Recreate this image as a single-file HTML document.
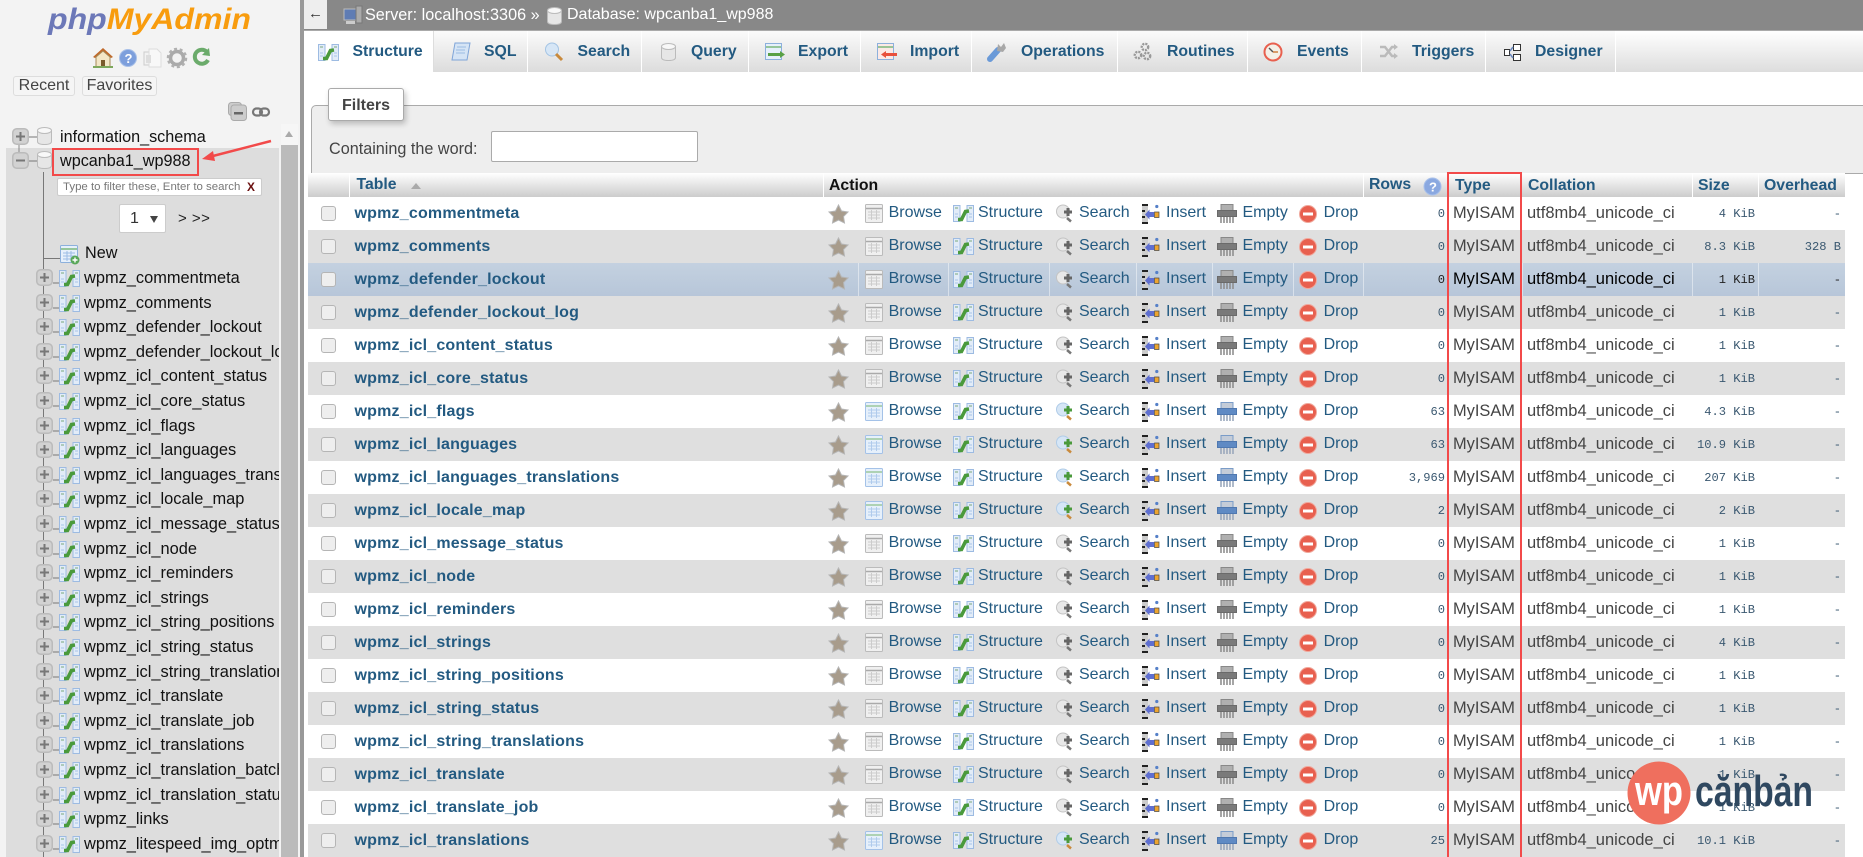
<!DOCTYPE html>
<html lang="en"><head><meta charset="utf-8"><title>phpMyAdmin</title>
<style>
html,body{margin:0;padding:0;background:#fff;overflow:hidden;height:857px}
body{position:relative;width:1863px;height:857px;overflow:hidden;font-family:"Liberation Sans",sans-serif;font-size:16px;color:#444}
.a{position:absolute}
#side{position:absolute;left:0;top:0;width:300px;height:857px;background:#f3f3f3;overflow:hidden}
#sep{position:absolute;left:300px;top:0;width:4px;height:857px;background:#999}
#gray{position:absolute;left:6px;top:148px;width:273px;height:709px;background:#ddd}
.b1{position:absolute;top:76px;height:18px;border:1px solid #ddd;border-radius:3px;background:#f5f5f5;line-height:18px;text-align:center;color:#444;font-size:16px}
.tt{position:absolute;left:84px;width:195px;overflow:hidden;white-space:nowrap;font-size:16.4px;line-height:20px;height:20px;color:#111}
.tree{position:absolute;left:36px;width:44px;height:20px}
#top{position:absolute;left:304px;top:0;width:1559px;height:30px;background:#888;border-bottom:1px solid #aaa}
#tabs{position:absolute;left:304px;top:31px;width:1559px;height:41px;background:linear-gradient(#fff,#ddd)}
.tab{position:absolute;top:31px;height:41px;border-right:1px solid #fff;background:linear-gradient(#fbfbfb,#dcdcdc);box-sizing:border-box}
.tx{position:absolute;top:42px;height:20px;line-height:20px;font-weight:bold;font-size:15.8px;color:#235a81;white-space:nowrap}
.ti{position:absolute;top:42px;width:22px;height:20px}
#fs{position:absolute;left:311px;top:105px;width:1560px;height:67px;background:#eee;border:1px solid #aaa;border-radius:5px 0 0 0}
#lg{position:absolute;left:328px;top:88px;width:76px;height:33px;background:#fff;border:1px solid #aaa;border-radius:3px;box-shadow:2px 3px 6px rgba(0,0,0,.22);box-sizing:border-box;text-align:center;line-height:33px;font-weight:bold;color:#444}
#inp{position:absolute;left:491px;top:131px;width:207px;height:31px;background:#fff;border:1px solid #aaa;border-radius:2px;box-sizing:border-box}
.h{position:absolute;top:173px;height:24px;background:linear-gradient(#fff,#ccc);border-right:1px solid #fff;box-sizing:border-box}
.ht{position:absolute;top:176px;line-height:20px;height:20px;font-weight:bold;color:#235a81;font-size:15.8px;white-space:nowrap}
.r{position:absolute;left:308px;width:1537px;height:33px;line-height:33px;white-space:nowrap;overflow:hidden}
.r.w{background:#fff}
.r.d{background:#dfdfdf}
.r.m{background:linear-gradient(#c4d1e0,#b7c6d9);color:#000}
.r i{position:absolute;left:13px;top:9px;width:13px;height:13px;border:1px solid #b5b5b5;border-radius:3px;background:#eee}
.r b{position:absolute;left:46.5px;top:0;color:#235a81;font-size:16px;letter-spacing:.2px}
.r svg{position:absolute;left:516px;top:0}
.r s{position:absolute;top:-1px;text-decoration:none;color:#235a81;font-size:16px}
.s1{left:580.6px}.s2{left:670px}.s3{left:771px}.s4{left:858px}.s5{left:934.5px}.s6{left:1015.6px}
.n{position:absolute;top:1px;font-family:"Liberation Mono",monospace;font-size:12.1px;color:#3a5870;right:400px}
.t1{position:absolute;left:1145px;font-size:16.4px}
.t2{position:absolute;left:1219px;font-size:16.5px}
.z{right:90px}.o{right:4px}
.m .n{color:#222}
.dv{position:absolute;top:0;width:1px;height:33px;background:rgba(255,255,255,.45)}
</style></head><body>
<svg width="0" height="0" style="position:absolute"><defs>
<g id="star"><polygon points="10.5,1 13.5,7 20,8 15.5,12.5 16.5,19 10.5,16 4.5,19 5.5,12.5 1,8 7.5,7" fill="#a89c8c" stroke="#b5b5b5" stroke-width="1"/></g>
<g id="st"><rect x=".5" y="1.5" width="6.5" height="16" fill="#e2ecf8" stroke="#9dbbe2"/><rect x="14" y="1.5" width="6.5" height="16" fill="#e2ecf8" stroke="#9dbbe2"/><path d="M2 4h3M16 4h3" stroke="#7ba87b"/><path d="M2 10h3M16 10h3M2 13h3M16 13h3" stroke="#a8c4e8"/><path d="M5 15.5 L8.5 15.5 L12.5 7.5 L16 7" fill="none" stroke="#4a9a3c" stroke-width="3.6"/></g>
<g id="brg"><rect x=".5" y=".5" width="17" height="18" fill="#f0f0f0" stroke="#bbb" rx="1"/><path d="M1 4.5h16" stroke="#aaa" stroke-width="1.5"/><path d="M3 8h12M3 11h12M3 14h12M6.500 6v10M11.500 6v10" stroke="#ccc"/></g>
<g id="brc"><rect x=".5" y=".5" width="17" height="18" fill="#e6f0fb" stroke="#a4c2e8" rx="1"/><path d="M1 4h16" stroke="#9cc89c" stroke-width="1.5"/><path d="M3 8h12M3 11h12M3 14h12M6.500 6v10M11.500 6v10" stroke="#b0cbec"/></g>
<g id="seg"><circle cx="7" cy="7.500" r="6.500" fill="#e8e8e8" stroke="#c4c4c4"/><path d="M8 8h8M12 4v8" stroke="#666" stroke-width="3"/><path d="M11 14l4 3.500" stroke="#777" stroke-width="2.500"/></g>
<g id="sec"><circle cx="7" cy="7.500" r="6.500" fill="#d6e6f6" stroke="#b0cce8"/><path d="M8 8h8M12 4v8" stroke="#4a9a3c" stroke-width="3"/><path d="M11 14l4 3.500" stroke="#c98a3c" stroke-width="2.500"/></g>
<g id="ins"><rect x="0" y="0" width="6" height="20" fill="#ccc"/><path d="M0 1h6M0 19h6M0 7h3M0 13h3" stroke="#222" stroke-width="2"/><path d="M12 8H7.500V5.500L3 10.500l4.500 5V13H12z" fill="#5f6fd0"/><rect x="12.500" y="8" width="4.500" height="5.500" fill="#eda52f" stroke="#444" stroke-width=".7"/><circle cx="14.800" cy="2.500" r="1.600" fill="#5580c8"/></g>
<g id="emg"><rect x="4" y=".5" width="12" height="7" fill="#b0b0b0" stroke="#888"/><rect x=".5" y="6.500" width="19" height="6" fill="#7a7a7a" stroke="#6a6a6a"/><path d="M4 13v6M7 13v6M10 13v6M13 13v6M16 13v6" stroke="#8f8f8f" stroke-width="1.600"/></g>
<g id="emc"><rect x="4" y=".5" width="12" height="7" fill="#c4ccd8" stroke="#7a9cc8"/><rect x=".5" y="6.500" width="19" height="6" fill="#5f8ac4" stroke="#4f78b0"/><path d="M4 13v6M7 13v6M10 13v6M13 13v6M16 13v6" stroke="#9aa8bc" stroke-width="1.600"/></g>
<g id="dr"><circle cx="9" cy="10" r="8.500" fill="#e8604f" stroke="#f0a89c"/><rect x="4" y="8.500" width="10" height="3" fill="#fff"/></g>
<g id="sgray"><use href="#star" x="4" y="7"/><use href="#brg" x="41" y="7"/><use href="#st" x="129" y="7"/><use href="#seg" x="232" y="7"/><use href="#ins" x="318" y="7"/><use href="#emg" x="393" y="7"/><use href="#dr" x="475" y="7"/></g>
<g id="scol"><use href="#star" x="4" y="7"/><use href="#brc" x="41" y="7"/><use href="#st" x="129" y="7"/><use href="#sec" x="232" y="7"/><use href="#ins" x="318" y="7"/><use href="#emc" x="393" y="7"/><use href="#dr" x="475" y="7"/></g>
<g id="plus"><rect x=".75" y=".75" width="15.500" height="15.500" rx="4" fill="#d2d2d2" stroke="#bbb" stroke-width="1.500"/><path d="M4 8.500h9M8.500 4v9" stroke="#777" stroke-width="2"/></g>
<g id="minus"><rect x=".75" y=".75" width="15.500" height="15.500" rx="4" fill="#d2d2d2" stroke="#bbb" stroke-width="1.500"/><path d="M4 8.500h9" stroke="#777" stroke-width="2"/></g>
<g id="db"><path d="M.5 3.500v11c0 2 3 3 7 3s7-1 7-3v-11" fill="#e6e6e6" stroke="#bbb"/><ellipse cx="7.500" cy="3.500" rx="7" ry="3" fill="#f8f8f8" stroke="#bbb"/></g>
<g id="tr"><use href="#plus" x="0" y="1"/><path d="M17 15h6" stroke="#777"/><use href="#st" x="23" y="1"/></g>
</defs></svg>

<div id="side">
<svg class="a" style="left:40px;top:0" width="220" height="42"><text x="8" y="29" font-family="Liberation Sans" font-weight="bold" font-style="italic" font-size="30" textLength="203" lengthAdjust="spacingAndGlyphs"><tspan fill="#6c78b8">php</tspan><tspan fill="#f89c0e">MyAdmin</tspan></text></svg>
<svg class="a" style="left:90px;top:46px" width="125" height="24">
<path d="M3 11L13 2l10 9-2 1-8-7-8 7z" fill="#c0692a"/><path d="M6 11v10h14V11l-7-6z" fill="#f3e6c6" stroke="#a58a58"/><rect x="11" y="14" width="4" height="7" fill="#7a5a2a"/><path d="M3 21h20" stroke="#7ea85c" stroke-width="2"/>
<circle cx="38" cy="12" r="8.500" fill="#7d9fdc" stroke="#a8c0e8"/><text x="34.500" y="17" font-size="13" font-weight="bold" fill="#fff" font-family="Liberation Sans">?</text>
<path d="M54 6h9v13h-9z" fill="#f2f2f2" stroke="#ccc"/><path d="M59 3h8l4 4v14H59z" fill="#f8f8f8" stroke="#ddd"/><rect x="56" y="9" width="5" height="8" fill="#ddd"/>
<circle cx="87" cy="12" r="6.500" fill="none" stroke="#aaa" stroke-width="3.500"/><circle cx="87" cy="12" r="9" fill="none" stroke="#b0b0b0" stroke-width="2.500" stroke-dasharray="3 2.600"/>
<path d="M117 6a7 7 0 1 0 1 8" fill="none" stroke="#6bab6b" stroke-width="4"/><path d="M112 9l8 1-1-8z" fill="#6bab6b"/>
</svg>
<div class="b1" style="left:13px;width:60px">Recent</div>
<div class="b1" style="left:82px;width:73px">Favorites</div>
<svg class="a" style="left:228px;top:100px" width="44" height="22"><rect x=".5" y="2.500" width="13" height="13" rx="3" fill="#ccc" stroke="#aaa"/><rect x="3" y="5" width="15.500" height="15.500" rx="3" fill="#ccc" stroke="#aaa"/><rect x="6" y="12" width="9" height="2.500" fill="#666"/><rect x="25" y="8.500" width="9" height="7" rx="3.500" fill="none" stroke="#777" stroke-width="2.200"/><rect x="32" y="8.500" width="9" height="7" rx="3.500" fill="none" stroke="#777" stroke-width="2.200"/></svg>
<div class="a" style="left:281px;top:124px;width:17px;height:21px;background:#f6f6f6"></div>
<div class="a" style="left:285px;top:131px;width:0;height:0;border-left:4.500px solid transparent;border-right:4.500px solid transparent;border-bottom:6px solid #aaa"></div>
<div class="a" style="left:281px;top:145px;width:17px;height:712px;background:#bbb"></div>
<div id="gray"></div>
<svg class="a" style="left:10px;top:126px" width="50" height="46"><path d="M9 18v8" stroke="#888"/><use href="#plus" x="2" y="2"/><use href="#minus" x="2" y="26"/><path d="M19 11h8M19 35h8" stroke="#777"/><use href="#db" x="27" y="1"/><use href="#db" x="27" y="25"/></svg>
<div class="a" style="left:60px;top:127px;height:20px;line-height:20px;font-size:16.2px;color:#111">information_schema</div>
<div class="a" style="left:60px;top:151px;height:20px;line-height:20px;font-size:16.2px;color:#111">wpcanba1_wp988</div>
<div class="a" style="left:43px;top:172px;width:1px;height:685px;background:#777"></div>
<div class="a" style="left:44px;top:258px;width:16px;height:1px;background:#777"></div>
<div class="a" style="left:57px;top:178px;width:205px;height:18px;background:#fff;border:1px solid #ccc;border-radius:2px;box-sizing:border-box;font-size:11.45px;line-height:16px;padding-left:5px;color:#777;white-space:nowrap">Type to filter these, Enter to search</div>
<div class="a" style="left:247px;top:178px;height:18px;line-height:18px;font-size:11.9px;font-weight:bold;color:#6b0f0f">X</div>
<div class="a" style="left:119px;top:204px;width:47px;height:29px;background:#fff;border:1px solid #ccc;border-radius:2px;box-sizing:border-box"></div>
<div class="a" style="left:130px;top:208px;line-height:22px;font-size:16px;color:#333">1</div>
<div class="a" style="left:150px;top:216px;width:0;height:0;border-left:4px solid transparent;border-right:4px solid transparent;border-top:7px solid #444"></div>
<div class="a" style="left:178px;top:209px;line-height:20px;font-size:15px;color:#222;letter-spacing:.5px">&gt; &gt;&gt;</div>
<svg class="a" style="left:60px;top:245px" width="20" height="20"><rect x=".5" y=".5" width="17" height="17" rx="1" fill="#e6f0fb" stroke="#8cb0dc"/><path d="M1 4h16" stroke="#7cb87c" stroke-width="1.500"/><path d="M3 8h12M3 11h12M3 14h12M7 6v10M11 6v10" stroke="#9cbce4"/><circle cx="15" cy="15" r="4.500" fill="#5aa85a"/><path d="M12.500 15h5M15 12.500v5" stroke="#fff" stroke-width="1.400"/></svg>
<div class="a" style="left:85px;top:243px;line-height:20px;font-size:16.2px;color:#111">New</div>

<svg class="tree" style="top:268px"><use href="#tr"/></svg><div class="tt" style="top:268px">wpmz_commentmeta</div>
<svg class="tree" style="top:292.600px"><use href="#tr"/></svg><div class="tt" style="top:292.600px">wpmz_comments</div>
<svg class="tree" style="top:317.200px"><use href="#tr"/></svg><div class="tt" style="top:317.200px">wpmz_defender_lockout</div>
<svg class="tree" style="top:341.800px"><use href="#tr"/></svg><div class="tt" style="top:341.800px">wpmz_defender_lockout_log</div>
<svg class="tree" style="top:366.400px"><use href="#tr"/></svg><div class="tt" style="top:366.400px">wpmz_icl_content_status</div>
<svg class="tree" style="top:391px"><use href="#tr"/></svg><div class="tt" style="top:391px">wpmz_icl_core_status</div>
<svg class="tree" style="top:415.600px"><use href="#tr"/></svg><div class="tt" style="top:415.600px">wpmz_icl_flags</div>
<svg class="tree" style="top:440.200px"><use href="#tr"/></svg><div class="tt" style="top:440.200px">wpmz_icl_languages</div>
<svg class="tree" style="top:464.800px"><use href="#tr"/></svg><div class="tt" style="top:464.800px">wpmz_icl_languages_translations</div>
<svg class="tree" style="top:489.400px"><use href="#tr"/></svg><div class="tt" style="top:489.400px">wpmz_icl_locale_map</div>
<svg class="tree" style="top:514px"><use href="#tr"/></svg><div class="tt" style="top:514px">wpmz_icl_message_status</div>
<svg class="tree" style="top:538.600px"><use href="#tr"/></svg><div class="tt" style="top:538.600px">wpmz_icl_node</div>
<svg class="tree" style="top:563.200px"><use href="#tr"/></svg><div class="tt" style="top:563.200px">wpmz_icl_reminders</div>
<svg class="tree" style="top:587.800px"><use href="#tr"/></svg><div class="tt" style="top:587.800px">wpmz_icl_strings</div>
<svg class="tree" style="top:612.400px"><use href="#tr"/></svg><div class="tt" style="top:612.400px">wpmz_icl_string_positions</div>
<svg class="tree" style="top:637px"><use href="#tr"/></svg><div class="tt" style="top:637px">wpmz_icl_string_status</div>
<svg class="tree" style="top:661.600px"><use href="#tr"/></svg><div class="tt" style="top:661.600px">wpmz_icl_string_translations</div>
<svg class="tree" style="top:686.200px"><use href="#tr"/></svg><div class="tt" style="top:686.200px">wpmz_icl_translate</div>
<svg class="tree" style="top:710.800px"><use href="#tr"/></svg><div class="tt" style="top:710.800px">wpmz_icl_translate_job</div>
<svg class="tree" style="top:735.400px"><use href="#tr"/></svg><div class="tt" style="top:735.400px">wpmz_icl_translations</div>
<svg class="tree" style="top:760px"><use href="#tr"/></svg><div class="tt" style="top:760px">wpmz_icl_translation_batch</div>
<svg class="tree" style="top:784.600px"><use href="#tr"/></svg><div class="tt" style="top:784.600px">wpmz_icl_translation_status</div>
<svg class="tree" style="top:809.200px"><use href="#tr"/></svg><div class="tt" style="top:809.200px">wpmz_links</div>
<svg class="tree" style="top:833.800px"><use href="#tr"/></svg><div class="tt" style="top:833.800px">wpmz_litespeed_img_optm</div>
<div class="a" style="left:52px;top:148px;width:147px;height:28px;border:2px solid #f24a4a;box-sizing:border-box"></div>
<svg class="a" style="left:195px;top:135px" width="85" height="32"><path d="M76 6L14 22" stroke="#f24a4a" stroke-width="2.500"/><path d="M7 24l11-8 2 10z" fill="#f24a4a"/></svg>
</div>
<div id="sep"></div>

<div id="top"></div>
<div class="a" style="left:304px;top:0;width:23px;height:29px;background:#eee;color:#333;text-align:center;line-height:28px;font-size:15px">&#8592;</div>
<svg class="a" style="left:343px;top:5px" width="20" height="21"><rect x="1" y="4" width="13" height="11" fill="#5f7cb4" stroke="#bbb"/><rect x="13" y="1" width="6" height="17" fill="#aaa" stroke="#777"/><rect x="3" y="16" width="9" height="3" fill="#ccc"/></svg>
<div class="a" style="left:365px;top:4px;line-height:22px;color:#fff;font-size:16.2px;white-space:nowrap">Server: localhost:3306 »</div>
<svg class="a" style="left:547px;top:7px" width="16" height="20"><use href="#db"/></svg>
<div class="a" style="left:567px;top:4px;line-height:22px;color:#fff;font-size:16px;white-space:nowrap">Database: wpcanba1_wp988</div>

<div id="tabs"></div>
<div class="tab" style="left:304px;width:130px;background:#fff;border-right:1px solid #ddd"></div>
<div class="tab" style="left:434px;width:94px"></div>
<div class="tab" style="left:528px;width:114px"></div>
<div class="tab" style="left:642px;width:107px"></div>
<div class="tab" style="left:749px;width:112px"></div>
<div class="tab" style="left:861px;width:111px"></div>
<div class="tab" style="left:972px;width:146px"></div>
<div class="tab" style="left:1118px;width:130px"></div>
<div class="tab" style="left:1248px;width:114px"></div>
<div class="tab" style="left:1362px;width:124px"></div>
<div class="tab" style="left:1486px;width:130px"></div>
<svg class="ti" style="left:318px"><use href="#st" x="0" y="1"/></svg><div class="tx" style="left:352.500px">Structure</div>
<svg class="ti" style="left:450px"><path d="M5 1h15l-3 17H2z" fill="#d5e4f5" stroke="#7fa5d8"/><path d="M7 5h9M6 8h9M6 11h9" stroke="#9cbce4"/></svg><div class="tx" style="left:484px">SQL</div>
<svg class="ti" style="left:545px"><circle cx="7" cy="7.500" r="6.500" fill="#d6e6f6" stroke="#a4c4e4"/><path d="M11 12l6 6" stroke="#c98a3c" stroke-width="3"/></svg><div class="tx" style="left:577.500px">Search</div>
<svg class="ti" style="left:660px"><use href="#db" x="1" y="1"/></svg><div class="tx" style="left:691px">Query</div>
<svg class="ti" style="left:765px"><rect x=".5" y="1.500" width="16" height="16" fill="#e6f0fb" stroke="#8cb0dc"/><path d="M1 5h15" stroke="#7cb87c" stroke-width="1.500"/><path d="M3 11h12v-2l5 3.500-5 3.500v-2H3z" fill="#58a045"/></svg><div class="tx" style="left:798px">Export</div>
<svg class="ti" style="left:877px"><rect x=".5" y="1.500" width="16" height="16" fill="#fbe9e6" stroke="#8cb0dc"/><path d="M1 5h15" stroke="#7cb87c" stroke-width="1.500"/><path d="M20 11H9V9l-5 3.500L9 16v-2h11z" fill="#e8503c"/></svg><div class="tx" style="left:910px">Import</div>
<svg class="ti" style="left:987px"><path d="M3 17L11 8" stroke="#6a9ad8" stroke-width="6" stroke-linecap="round"/><path d="M10 9l1-7 3 3 3-4 2 5-3 4z" fill="#a8a8a8"/></svg><div class="tx" style="left:1021px">Operations</div>
<svg class="ti" style="left:1133px"><circle cx="12" cy="5" r="3.200" fill="none" stroke="#999" stroke-width="2.400" stroke-dasharray="2 1"/><circle cx="5" cy="13" r="3.200" fill="none" stroke="#999" stroke-width="2.400" stroke-dasharray="2 1"/><circle cx="14" cy="14" r="3.200" fill="none" stroke="#999" stroke-width="2.400" stroke-dasharray="2 1"/></svg><div class="tx" style="left:1167px">Routines</div>
<svg class="ti" style="left:1263px"><circle cx="10" cy="10" r="8.500" fill="#f4f0e8" stroke="#e8604f" stroke-width="2"/><path d="M10 10L6 6" stroke="#555" stroke-width="1.500"/><path d="M10 10h5" stroke="#d08040" stroke-width="1.500"/></svg><div class="tx" style="left:1297px">Events</div>
<svg class="ti" style="left:1379px"><path d="M1 5h5l7 9h3M1 14h5l7-9h3" fill="none" stroke="#bbb" stroke-width="2.500"/><path d="M15 2l4 3-4 3zM15 11l4 3-4 3z" fill="#bbb"/></svg><div class="tx" style="left:1412px">Triggers</div>
<svg class="ti" style="left:1503px"><rect x="10.500" y="2.500" width="7" height="6" fill="#fff" stroke="#333"/><rect x="10.500" y="12.500" width="7" height="6" fill="#fff" stroke="#333"/><rect x="1.500" y="7.500" width="5" height="6" fill="#fff" stroke="#333"/><path d="M7 9l3-4M7 12l3 4" stroke="#6a88c0" stroke-width="1.500"/></svg><div class="tx" style="left:1535px">Designer</div>

<div id="fs"></div>
<div id="lg">Filters</div>
<div class="a" style="left:329px;top:138px;line-height:22px;font-size:16.2px;color:#444">Containing the word:</div>
<div id="inp"></div>

<div class="h" style="left:308px;width:42px"></div>
<div class="h" style="left:350px;width:474px"></div>
<div class="h" style="left:824px;width:540px"></div>
<div class="h" style="left:1364px;width:84px"></div>
<div class="h" style="left:1448px;width:74px"></div>
<div class="h" style="left:1522px;width:171px"></div>
<div class="h" style="left:1693px;width:66px"></div>
<div class="h" style="left:1759px;width:86px;border-right:0"></div>
<div class="ht" style="left:356.500px;top:175px">Table</div>
<div class="a" style="left:411px;top:183px;width:0;height:0;border-left:5px solid transparent;border-right:5px solid transparent;border-bottom:6px solid #aaa"></div>
<div class="ht" style="left:829px;color:#111">Action</div>
<div class="ht" style="left:1369px;top:175px">Rows</div>
<svg class="a" style="left:1423px;top:177px" width="19" height="19"><circle cx="9.500" cy="9.500" r="8.500" fill="#8aa8e0" stroke="#a8c0ea"/><text x="6" y="14.500" font-size="13" font-weight="bold" fill="#fff" font-family="Liberation Sans">?</text></svg>
<div class="ht" style="left:1455px">Type</div>
<div class="ht" style="left:1528px">Collation</div>
<div class="ht" style="left:1698px">Size</div>
<div class="ht" style="left:1764px">Overhead</div>

<div class="r w" style="top:197px"><i></i><b>wpmz_commentmeta</b><svg width="540" height="33"><use href="#sgray"/></svg><s class="s1">Browse</s><s class="s2">Structure</s><s class="s3">Search</s><s class="s4">Insert</s><s class="s5">Empty</s><s class="s6">Drop</s><span class="n">0</span><span class="t1">MyISAM</span><span class="t2">utf8mb4_unicode_ci</span><span class="n z">4 KiB</span><span class="n o">-</span></div>
<div class="r d" style="top:230px"><i></i><b>wpmz_comments</b><svg width="540" height="33"><use href="#sgray"/></svg><s class="s1">Browse</s><s class="s2">Structure</s><s class="s3">Search</s><s class="s4">Insert</s><s class="s5">Empty</s><s class="s6">Drop</s><span class="n">0</span><span class="t1">MyISAM</span><span class="t2">utf8mb4_unicode_ci</span><span class="n z">8.3 KiB</span><span class="n o">328 B</span></div>
<div class="r m" style="top:263px"><i></i><b>wpmz_defender_lockout</b><svg width="540" height="33"><use href="#sgray"/></svg><s class="s1">Browse</s><s class="s2">Structure</s><s class="s3">Search</s><s class="s4">Insert</s><s class="s5">Empty</s><s class="s6">Drop</s><span class="n">0</span><span class="t1">MyISAM</span><span class="t2">utf8mb4_unicode_ci</span><span class="n z">1 KiB</span><span class="n o">-</span><u class="dv" style="left:550px"></u><u class="dv" style="left:640px"></u><u class="dv" style="left:741px"></u><u class="dv" style="left:828px"></u><u class="dv" style="left:904px"></u><u class="dv" style="left:985px"></u><u class="dv" style="left:1055px"></u><u class="dv" style="left:1140px"></u><u class="dv" style="left:1214px"></u><u class="dv" style="left:1384px"></u><u class="dv" style="left:1450px"></u></div>
<div class="r d" style="top:296px"><i></i><b>wpmz_defender_lockout_log</b><svg width="540" height="33"><use href="#sgray"/></svg><s class="s1">Browse</s><s class="s2">Structure</s><s class="s3">Search</s><s class="s4">Insert</s><s class="s5">Empty</s><s class="s6">Drop</s><span class="n">0</span><span class="t1">MyISAM</span><span class="t2">utf8mb4_unicode_ci</span><span class="n z">1 KiB</span><span class="n o">-</span></div>
<div class="r w" style="top:329px"><i></i><b>wpmz_icl_content_status</b><svg width="540" height="33"><use href="#sgray"/></svg><s class="s1">Browse</s><s class="s2">Structure</s><s class="s3">Search</s><s class="s4">Insert</s><s class="s5">Empty</s><s class="s6">Drop</s><span class="n">0</span><span class="t1">MyISAM</span><span class="t2">utf8mb4_unicode_ci</span><span class="n z">1 KiB</span><span class="n o">-</span></div>
<div class="r d" style="top:362px"><i></i><b>wpmz_icl_core_status</b><svg width="540" height="33"><use href="#sgray"/></svg><s class="s1">Browse</s><s class="s2">Structure</s><s class="s3">Search</s><s class="s4">Insert</s><s class="s5">Empty</s><s class="s6">Drop</s><span class="n">0</span><span class="t1">MyISAM</span><span class="t2">utf8mb4_unicode_ci</span><span class="n z">1 KiB</span><span class="n o">-</span></div>
<div class="r w" style="top:395px"><i></i><b>wpmz_icl_flags</b><svg width="540" height="33"><use href="#scol"/></svg><s class="s1">Browse</s><s class="s2">Structure</s><s class="s3">Search</s><s class="s4">Insert</s><s class="s5">Empty</s><s class="s6">Drop</s><span class="n">63</span><span class="t1">MyISAM</span><span class="t2">utf8mb4_unicode_ci</span><span class="n z">4.3 KiB</span><span class="n o">-</span></div>
<div class="r d" style="top:428px"><i></i><b>wpmz_icl_languages</b><svg width="540" height="33"><use href="#scol"/></svg><s class="s1">Browse</s><s class="s2">Structure</s><s class="s3">Search</s><s class="s4">Insert</s><s class="s5">Empty</s><s class="s6">Drop</s><span class="n">63</span><span class="t1">MyISAM</span><span class="t2">utf8mb4_unicode_ci</span><span class="n z">10.9 KiB</span><span class="n o">-</span></div>
<div class="r w" style="top:461px"><i></i><b>wpmz_icl_languages_translations</b><svg width="540" height="33"><use href="#scol"/></svg><s class="s1">Browse</s><s class="s2">Structure</s><s class="s3">Search</s><s class="s4">Insert</s><s class="s5">Empty</s><s class="s6">Drop</s><span class="n">3,969</span><span class="t1">MyISAM</span><span class="t2">utf8mb4_unicode_ci</span><span class="n z">207 KiB</span><span class="n o">-</span></div>
<div class="r d" style="top:494px"><i></i><b>wpmz_icl_locale_map</b><svg width="540" height="33"><use href="#scol"/></svg><s class="s1">Browse</s><s class="s2">Structure</s><s class="s3">Search</s><s class="s4">Insert</s><s class="s5">Empty</s><s class="s6">Drop</s><span class="n">2</span><span class="t1">MyISAM</span><span class="t2">utf8mb4_unicode_ci</span><span class="n z">2 KiB</span><span class="n o">-</span></div>
<div class="r w" style="top:527px"><i></i><b>wpmz_icl_message_status</b><svg width="540" height="33"><use href="#sgray"/></svg><s class="s1">Browse</s><s class="s2">Structure</s><s class="s3">Search</s><s class="s4">Insert</s><s class="s5">Empty</s><s class="s6">Drop</s><span class="n">0</span><span class="t1">MyISAM</span><span class="t2">utf8mb4_unicode_ci</span><span class="n z">1 KiB</span><span class="n o">-</span></div>
<div class="r d" style="top:560px"><i></i><b>wpmz_icl_node</b><svg width="540" height="33"><use href="#sgray"/></svg><s class="s1">Browse</s><s class="s2">Structure</s><s class="s3">Search</s><s class="s4">Insert</s><s class="s5">Empty</s><s class="s6">Drop</s><span class="n">0</span><span class="t1">MyISAM</span><span class="t2">utf8mb4_unicode_ci</span><span class="n z">1 KiB</span><span class="n o">-</span></div>
<div class="r w" style="top:593px"><i></i><b>wpmz_icl_reminders</b><svg width="540" height="33"><use href="#sgray"/></svg><s class="s1">Browse</s><s class="s2">Structure</s><s class="s3">Search</s><s class="s4">Insert</s><s class="s5">Empty</s><s class="s6">Drop</s><span class="n">0</span><span class="t1">MyISAM</span><span class="t2">utf8mb4_unicode_ci</span><span class="n z">1 KiB</span><span class="n o">-</span></div>
<div class="r d" style="top:626px"><i></i><b>wpmz_icl_strings</b><svg width="540" height="33"><use href="#sgray"/></svg><s class="s1">Browse</s><s class="s2">Structure</s><s class="s3">Search</s><s class="s4">Insert</s><s class="s5">Empty</s><s class="s6">Drop</s><span class="n">0</span><span class="t1">MyISAM</span><span class="t2">utf8mb4_unicode_ci</span><span class="n z">4 KiB</span><span class="n o">-</span></div>
<div class="r w" style="top:659px"><i></i><b>wpmz_icl_string_positions</b><svg width="540" height="33"><use href="#sgray"/></svg><s class="s1">Browse</s><s class="s2">Structure</s><s class="s3">Search</s><s class="s4">Insert</s><s class="s5">Empty</s><s class="s6">Drop</s><span class="n">0</span><span class="t1">MyISAM</span><span class="t2">utf8mb4_unicode_ci</span><span class="n z">1 KiB</span><span class="n o">-</span></div>
<div class="r d" style="top:692px"><i></i><b>wpmz_icl_string_status</b><svg width="540" height="33"><use href="#sgray"/></svg><s class="s1">Browse</s><s class="s2">Structure</s><s class="s3">Search</s><s class="s4">Insert</s><s class="s5">Empty</s><s class="s6">Drop</s><span class="n">0</span><span class="t1">MyISAM</span><span class="t2">utf8mb4_unicode_ci</span><span class="n z">1 KiB</span><span class="n o">-</span></div>
<div class="r w" style="top:725px"><i></i><b>wpmz_icl_string_translations</b><svg width="540" height="33"><use href="#sgray"/></svg><s class="s1">Browse</s><s class="s2">Structure</s><s class="s3">Search</s><s class="s4">Insert</s><s class="s5">Empty</s><s class="s6">Drop</s><span class="n">0</span><span class="t1">MyISAM</span><span class="t2">utf8mb4_unicode_ci</span><span class="n z">1 KiB</span><span class="n o">-</span></div>
<div class="r d" style="top:758px"><i></i><b>wpmz_icl_translate</b><svg width="540" height="33"><use href="#sgray"/></svg><s class="s1">Browse</s><s class="s2">Structure</s><s class="s3">Search</s><s class="s4">Insert</s><s class="s5">Empty</s><s class="s6">Drop</s><span class="n">0</span><span class="t1">MyISAM</span><span class="t2">utf8mb4_unicode_ci</span><span class="n z">1 KiB</span><span class="n o">-</span></div>
<div class="r w" style="top:791px"><i></i><b>wpmz_icl_translate_job</b><svg width="540" height="33"><use href="#sgray"/></svg><s class="s1">Browse</s><s class="s2">Structure</s><s class="s3">Search</s><s class="s4">Insert</s><s class="s5">Empty</s><s class="s6">Drop</s><span class="n">0</span><span class="t1">MyISAM</span><span class="t2">utf8mb4_unicode_ci</span><span class="n z">1 KiB</span><span class="n o">-</span></div>
<div class="r d" style="top:824px"><i></i><b>wpmz_icl_translations</b><svg width="540" height="33"><use href="#scol"/></svg><s class="s1">Browse</s><s class="s2">Structure</s><s class="s3">Search</s><s class="s4">Insert</s><s class="s5">Empty</s><s class="s6">Drop</s><span class="n">25</span><span class="t1">MyISAM</span><span class="t2">utf8mb4_unicode_ci</span><span class="n z">10.1 KiB</span><span class="n o">-</span></div>

<div class="a" style="left:1447px;top:172px;width:75px;height:685px;border:2px solid #f24a4a;border-bottom:0;box-sizing:border-box"></div>

<svg class="a" style="left:1620px;top:755px" width="210" height="80">
<circle cx="39" cy="38" r="31.500" fill="#ef6f5e"/>
<text x="15" y="50" font-family="Liberation Sans" font-weight="bold" font-size="42" fill="#fff" textLength="48" lengthAdjust="spacingAndGlyphs">wp</text>
<text x="75" y="51" font-family="Liberation Sans" font-weight="bold" font-size="44" fill="#2f4860" textLength="118" lengthAdjust="spacingAndGlyphs">cănbản</text>
</svg>
</body></html>
